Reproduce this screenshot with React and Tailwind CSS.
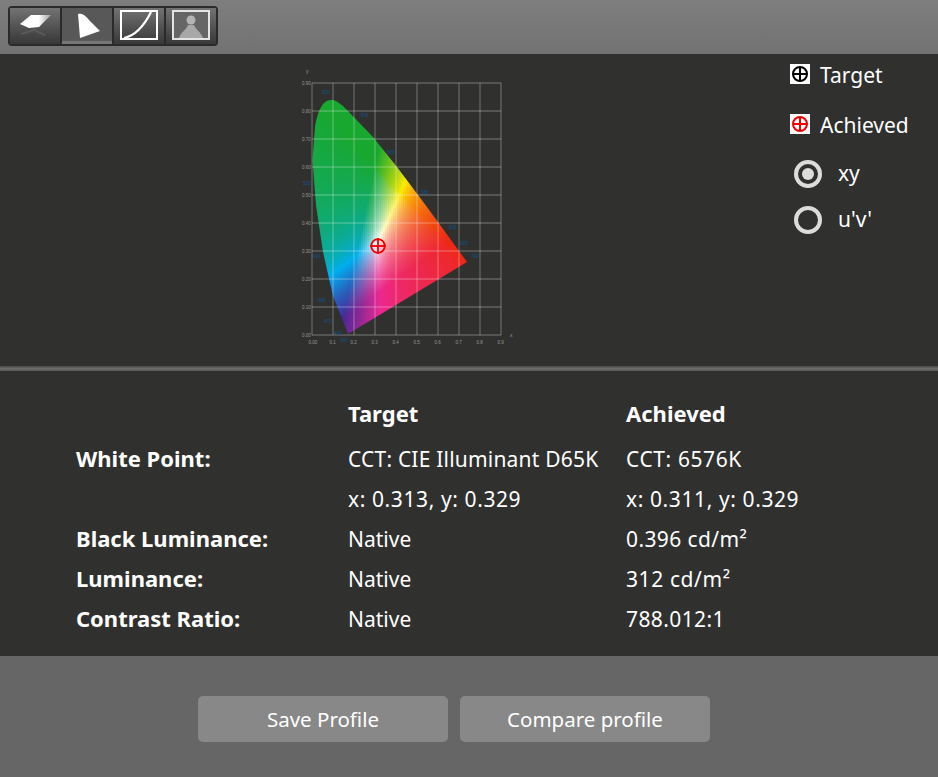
import React from "react";

const FONT = { fontFamily: '"Noto Sans", sans-serif' };

const gridX = [312, 333, 354, 375, 396, 417, 438, 459, 480, 501];
const gridY = [83, 111, 139, 167, 195, 223, 251, 279, 307, 335];
const yLabels = ["0.90", "0.80", "0.70", "0.60", "0.50", "0.40", "0.30", "0.20", "0.10", "0.00"];
const xLabels = ["0.00", "0.1", "0.2", "0.3", "0.4", "0.5", "0.6", "0.7", "0.8", "0.9"];
const waveLabels = [
  ["520", 322, 94],
  ["540", 361, 117],
  ["560", 387, 154],
  ["580", 421, 194],
  ["600", 449, 229],
  ["620", 460, 245],
  ["700", 471, 258],
  ["500", 303, 185],
  ["490", 313, 258],
  ["480", 318, 302],
  ["470", 324, 323],
  ["460", 334, 335],
  ["380", 340, 342],
];

// print-style corner colours the diagram is tinted with
const CORNERS = {
  r: [238, 40, 20],
  g: [24, 168, 48],
  b: [70, 40, 150],
  c: [0, 174, 239],
  m: [236, 40, 145],
  y: [255, 236, 0],
  w: [255, 255, 255],
};

function cieColor(x, y) {
  const X = x / y;
  const Z = Math.max((1 - x - y) / y, 0);
  let r = 3.2406 * X - 1.5372 - 0.4986 * Z;
  let g = -0.9689 * X + 1.8758 + 0.0415 * Z;
  let b = 0.0557 * X - 0.204 + 1.057 * Z;
  r = Math.max(r, 0);
  g = Math.max(g, 0);
  b = Math.max(b, 0);
  // keep the left side green/teal longer, push the lower right towards pink
  if (x < 0.3) g *= 1 + (0.3 - x) * 5;
  const max = Math.max(r, g, b);
  r = Math.pow(r / max, 0.85);
  g = Math.pow(g / max, 0.95);
  b = Math.pow(b / max, x > 0.3 ? 0.5 : 0.9);
  const out = [0, 1, 2].map((i) => {
    const low =
      (1 - r) * (1 - g) * b * CORNERS.b[i] +
      r * (1 - g) * (1 - b) * CORNERS.r[i] +
      (1 - r) * g * (1 - b) * CORNERS.g[i];
    const high =
      r * g * (1 - b) * CORNERS.y[i] +
      r * (1 - g) * b * CORNERS.m[i] +
      (1 - r) * g * b * CORNERS.c[i] +
      r * g * b * CORNERS.w[i];
    return Math.round(low + high);
  });
  return `rgb(${out[0]},${out[1]},${out[2]})`;
}

const cells = [];
for (let py = 98; py < 336; py += 2) {
  for (let px = 311; px < 468; px += 2) {
    const x = (px + 1 - 312) / 210;
    const y = (335 - py - 1) / 280;
    if (y > 0.005) cells.push([px, py, cieColor(Math.max(x, 0.001), y)]);
  }
}

function Chart() {
  return (
    <svg viewBox="296 54 224 312" className="w-[224px] h-[312px] shrink-0">
      <defs>
        <clipPath id="locus">
          <path d="M348 334 L333 296 L323 252 L316 205 L312.5 160 L315 127 C318 108 324 100 331 100 C337 100 342 105 347 110 L373 137 L397 167 L427 207 L467 262 Z" />
        </clipPath>
      </defs>

      <g clipPath="url(#locus)" shapeRendering="crispEdges">
        {cells.map(([px, py, fill]) => (
          <rect key={px + "-" + py} x={px} y={py} width="2" height="2" fill={fill} />
        ))}
      </g>

      <g stroke="#ffffff" strokeOpacity="0.24" strokeWidth="1.4">
        {gridX.map((x) => (
          <line key={x} x1={x} y1="83" x2={x} y2="335" />
        ))}
        {gridY.map((y) => (
          <line key={y} x1="312" y1={y} x2="501" y2={y} />
        ))}
      </g>

      <g fontSize="4.5" fill="#999999" style={{ fontFamily: '"Liberation Sans", sans-serif' }}>
        <text x="306" y="73" fontSize="5">y</text>
        <text x="510" y="337" fontSize="5">x</text>
        {yLabels.map((label, i) => (
          <text key={label} x="302" y={gridY[i] + 1.5}>{label}</text>
        ))}
        {xLabels.map((label, i) => (
          <text key={label} x={gridX[i] - 3.5} y="344">{label}</text>
        ))}
      </g>
      <g fontSize="4.5" fill="#0f5590" style={{ fontFamily: '"Liberation Sans", sans-serif' }}>
        {waveLabels.map(([label, x, y]) => (
          <text key={label} x={x} y={y}>{label}</text>
        ))}
      </g>

      <g fill="none" stroke="#f00000" strokeWidth="1.8">
        <circle cx="378" cy="246" r="6.8" />
        <line x1="378" y1="238" x2="378" y2="254" />
        <line x1="370" y1="246" x2="386" y2="246" />
      </g>
    </svg>
  );
}

const Crosshair = ({ color }) => (
  <svg viewBox="0 0 20 20" className="w-5 h-5 shrink-0 bg-white">
    <g fill="none" stroke={color} strokeWidth="2">
      <circle cx="10" cy="10" r="7" />
      <line x1="10" y1="3" x2="10" y2="17" />
      <line x1="3" y1="10" x2="17" y2="10" />
    </g>
  </svg>
);

const Radio = ({ checked, label }) => (
  <div className="flex items-center h-[28px] pl-1">
    <span className="w-[28px] h-[28px] rounded-full border-[4px] border-[#dcdcdc] flex items-center justify-center shrink-0">
      {checked && <span className="w-[12px] h-[12px] rounded-full bg-[#dcdcdc]" />}
    </span>
    <span className="ml-4 leading-none -mt-0.5">{label}</span>
  </div>
);

const ToolButton = ({ active, children }) => (
  <div
    className={`w-[50px] h-full flex items-center justify-center ${
      active
        ? "bg-[#585858] border-b-[3px] border-[#777777]"
        : "bg-gradient-to-b from-[#737373] to-[#383838]"
    }`}
  >
    {children}
  </div>
);

function Toolbar() {
  return (
    <div className="h-[54px] bg-gradient-to-b from-[#7e7e7e] to-[#727272] pl-2 pt-[6px]">
      <div className="w-[210px] h-[40px] bg-[#2a2a2a] rounded-[4px] p-[2px] flex gap-[2px]">
        <ToolButton>
          <svg viewBox="0 0 50 36" className="w-[50px] h-[36px]">
            <defs>
              <linearGradient id="fade" x1="0" x2="1" y1="0" y2="0">
                <stop offset="0.1" stopColor="#ffffff" />
                <stop offset="0.6" stopColor="#ffffff" />
                <stop offset="1" stopColor="#a0a0a0" />
              </linearGradient>
            </defs>
            <polygon points="10,16 21,7 41,7 29,19 19,20" fill="url(#fade)" />
            <path d="M11 26 L24 22 L35 27 M24 22 V20" fill="none" stroke="#5c5c5c" strokeWidth="1.5" />
          </svg>
        </ToolButton>
        <ToolButton active>
          <svg viewBox="0 0 50 36" className="w-[50px] h-[36px]">
            <path d="M16 7 C20 6 24 9 27 13 L38 24 L18 31 Z" fill="#ffffff" />
          </svg>
        </ToolButton>
        <ToolButton>
          <svg viewBox="0 0 50 36" className="w-[50px] h-[36px]">
            <rect x="7" y="3" width="36" height="28" fill="none" stroke="#ffffff" strokeWidth="2" />
            <path d="M10 30 C20 28 29 20 37 4" fill="none" stroke="#ffffff" strokeWidth="2.2" />
          </svg>
        </ToolButton>
        <ToolButton>
          <svg viewBox="0 0 50 36" className="w-[50px] h-[36px]">
            <rect x="7" y="3" width="36" height="28" fill="#666666" stroke="#e4e4e4" strokeWidth="2" />
            <circle cx="25" cy="12" r="4.5" fill="#b4b4b4" />
            <path d="M13 30 C15 24 20 22 22 17 H28 C30 22 35 24 37 30 Z" fill="#a8a8a8" />
          </svg>
        </ToolButton>
      </div>
    </div>
  );
}

// digit-heavy strings run a little wider in the original face
const rows = [
  ["White Point:", "CCT: CIE Illuminant D65K", "CCT: 6576K", "tracking-[0.2px]", "tracking-[0.6px]"],
  ["", "x: 0.313, y: 0.329", "x: 0.311, y: 0.329", "tracking-[0.6px]", "tracking-[0.6px]"],
  ["Black Luminance:", "Native", "0.396 cd/m²", "", "tracking-[0.4px]"],
  ["Luminance:", "Native", "312 cd/m²", "", "tracking-[0.6px]"],
  ["Contrast Ratio:", "Native", "788.012:1", "", "tracking-[0.4px]"],
];

export default function App() {
  return (
    <div className="w-[938px] h-[777px] overflow-hidden flex flex-col text-white text-[21px]" style={FONT}>
      <Toolbar />

      <div className="h-[312px] bg-[#30302e] flex">
        <div className="pl-[296px]">
          <Chart />
        </div>
        <div className="ml-auto w-[148px] pt-[10px]">
          <div className="flex items-center gap-2.5 h-5">
            <Crosshair color="#000000" />
            <span className="mt-1">Target</span>
          </div>
          <div className="flex items-center gap-2.5 h-5 mt-[30px]">
            <Crosshair color="#f00000" />
            <span className="mt-1">Achieved</span>
          </div>
          <div className="mt-[26px] flex flex-col gap-[18px]">
            <Radio checked label="xy" />
            <Radio label="u'v'" />
          </div>
        </div>
      </div>

      <div className="h-[5px] bg-gradient-to-b from-[#474745] via-[#6c6c6c] to-[#5a5a5a]" />

      <div className="flex-1 bg-[#30302e] pl-[76px] pt-[23px]">
        <div className="grid grid-cols-[272px_278px_1fr] h-[40px] items-center font-bold text-[22px]">
          <span />
          <span className="-mt-0.5">Target</span>
          <span className="-mt-0.5">Achieved</span>
        </div>
        <div className="mt-[5px]">
          {rows.map(([label, target, achieved, targetTrack, achievedTrack]) => (
            <div key={target + achieved} className="grid grid-cols-[272px_278px_1fr] h-[40px] items-center">
              <span className="font-bold text-[22px] -mt-0.5">{label}</span>
              <span className={`mt-0.5 ${targetTrack}`}>{target}</span>
              <span className={`mt-0.5 ${achievedTrack}`}>{achieved}</span>
            </div>
          ))}
        </div>
      </div>

      <div className="h-[121px] bg-[#666666] flex gap-3 pt-10 pl-[198px] text-[20.5px]">
        <button className="w-[250px] h-[46px] rounded-[5px] bg-[#888888]">Save Profile</button>
        <button className="w-[250px] h-[46px] rounded-[5px] bg-[#888888]">Compare profile</button>
      </div>
    </div>
  );
}
